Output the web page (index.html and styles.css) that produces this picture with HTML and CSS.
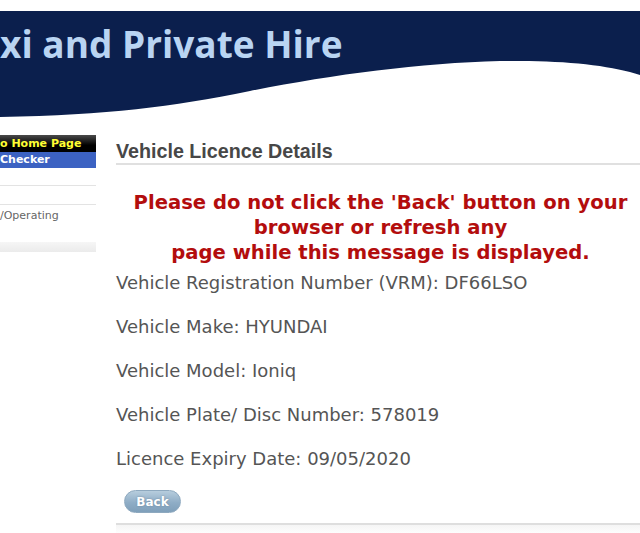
FILE: index.html
```html
<!DOCTYPE html>
<html lang="en">
<head>
    <meta charset="UTF-8">
    <meta name="viewport" content="width=device-width, initial-scale=1.0">
    <title>Vehicle Licence Details</title>
    <link rel="stylesheet" href="styles.css">
</head>
<body>
    <header class="masthead">
        <div class="banner">
            <div class="banner-title">xi and Private Hire</div>
        </div>
        <svg class="wave" viewBox="0 0 640 56" preserveAspectRatio="none" aria-hidden="true">
            <path d="M0 0 H640 V14 C610 4 560 -1 500 0 C420 2 330 14 250 30 C170 46 110 54 0 56 Z" fill="#0b1f4d"/>
        </svg>
    </header>

    <div class="layout">
        <nav class="sidebar">
            <a class="nav-home" href="#">o Home Page</a>
            <a class="nav-active" href="#">Checker</a>
            <div class="nav-rule"></div>
            <div class="nav-rule"></div>
            <a class="nav-link" href="#">/Operating</a>
            <div class="nav-foot"></div>
        </nav>

        <main class="content">
            <h2>Vehicle Licence Details</h2>

            <div class="warning">
                Please do not click the 'Back' button on your browser or refresh any<br>
                page while this message is displayed.
            </div>

            <div class="details">
                <p>Vehicle Registration Number (VRM): DF66LSO</p>
                <p>Vehicle Make: HYUNDAI</p>
                <p>Vehicle Model: Ioniq</p>
                <p>Vehicle Plate/ Disc Number: 578019</p>
                <p>Licence Expiry Date: 09/05/2020</p>
            </div>

            <div class="actions">
                <button class="btn-back" type="button">Back</button>
            </div>

            <div class="content-foot"></div>
        </main>
    </div>
</body>
</html>
```

FILE: styles.css
```css
* {
    box-sizing: border-box;
}

body {
    margin: 0;
    background: #fff;
    font-family: "DejaVu Sans", Verdana, sans-serif;
    overflow: hidden;
}

/* header image area */
.masthead {
    padding-top: 11px;
}

.banner {
    background: #0b1f4d;
    height: 50px;
    padding-top: 15px;
}

.banner-title {
    font-family: "Open Sans", Lato, sans-serif;
    font-weight: 700;
    font-size: 37px;
    line-height: 36px;
    color: #b9d4f2;
    white-space: nowrap;
}

.wave {
    display: block;
    width: 100%;
    height: 56px;
}

.layout {
    display: flex;
    gap: 20px;
    margin-top: 18px;
}

/* left menu */
.sidebar {
    width: 96px;
    flex-shrink: 0;
    display: flex;
    flex-direction: column;
}

.sidebar a {
    text-decoration: none;
    white-space: nowrap;
    overflow: hidden;
}

.nav-home {
    height: 17px;
    line-height: 17px;
    background: linear-gradient(#4a4a4a, #000 60%);
    color: #ffff33;
    font-weight: 700;
    font-size: 11px;
}

.nav-active {
    height: 16px;
    line-height: 16px;
    background: #3c62c2;
    color: #fff;
    font-weight: 700;
    font-size: 11px;
}

.nav-rule {
    height: 1px;
    background: #e3e3e3;
    margin-top: 17px;
}

.nav-rule + .nav-rule {
    margin-top: 18px;
}

.nav-link {
    color: #666;
    font-size: 11px;
    line-height: 16px;
    margin-top: 3px;
}

.nav-foot {
    height: 10px;
    margin-top: 18px;
    background: linear-gradient(#f6f6f6, #ebebeb);
}

/* main panel */
.content {
    flex: 1;
    padding-top: 5px;
}

.content h2 {
    margin: 0;
    font-family: "Liberation Sans", Arial, sans-serif;
    font-size: 19.7px;
    line-height: 22px;
    font-weight: 700;
    color: #474747;
    padding-bottom: 1px;
    border-bottom: 2px solid #e0e0e0;
}

.warning {
    margin-top: 25px;
    padding-left: 5px;
    text-align: center;
    color: #b30d0d;
    font-weight: 700;
    font-size: 19.6px;
    line-height: 25px;
}

.details {
    display: flex;
    flex-direction: column;
    gap: 24px;
    margin-top: 8px;
}

.details p {
    margin: 0;
    font-size: 18px;
    line-height: 20px;
    color: #555;
}

.actions {
    margin-top: 21px;
    padding-left: 8px;
}

.btn-back {
    width: 57px;
    height: 23px;
    border: 1px solid #8ea9bf;
    border-radius: 12px;
    background: linear-gradient(#b7cddd, #8fadc6 55%, #7f9fba);
    color: #fff;
    font-family: "DejaVu Sans", Verdana, sans-serif;
    font-weight: 700;
    font-size: 12px;
    text-shadow: 0 0 2px #6b879e;
    padding: 0;
}

.content-foot {
    margin-top: 10px;
    height: 12px;
    border-top: 2px solid #dedede;
    background: linear-gradient(#f5f5f5, #fff);
}
```
